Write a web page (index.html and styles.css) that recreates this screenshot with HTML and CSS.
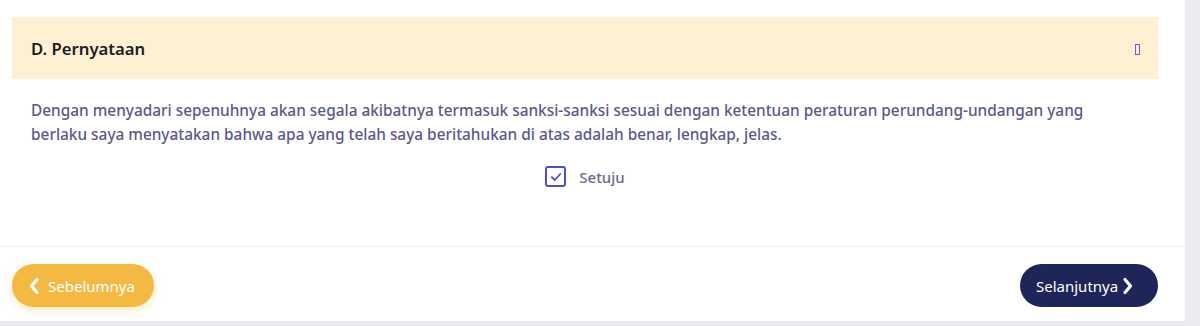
FILE: index.html
```html
<!DOCTYPE html>
<html>
    <head>
        <title>Pernyataan</title>
        <link rel="stylesheet" href="styles.css">
    </head>
    <body>
        <div class="card">
            <div class="card-body">
                <div class="section-head">
                    <span class="section-title">D. Pernyataan</span>
                    <span class="tofu"></span>
                </div>
                <p class="statement">Dengan menyadari sepenuhnya akan segala akibatnya termasuk sanksi-sanksi sesuai dengan ketentuan peraturan perundang-undangan yang berlaku saya menyatakan bahwa apa yang telah saya beritahukan di atas adalah benar, lengkap, jelas.</p>
                <label class="agree">
                    <span class="check">
                        <svg width="12" height="12" viewBox="0 0 12 12"><path d="M1.8 6.2 L4.8 9 L10.2 3" fill="none" stroke="#4b4fc9" stroke-width="1.8" stroke-linecap="round" stroke-linejoin="round"/></svg>
                    </span>
                    Setuju
                </label>
            </div>
            <div class="card-foot">
                <button class="btn btn-prev">
                    <svg width="12" height="18" viewBox="0 0 12 18"><path d="M9 2.5 L3.5 9 L9 15.5" fill="none" stroke="#fff" stroke-width="3.2" stroke-linecap="round" stroke-linejoin="round"/></svg>
                    Sebelumnya
                </button>
                <button class="btn btn-next">
                    Selanjutnya
                    <svg width="12" height="18" viewBox="0 0 12 18"><path d="M3 2.5 L8.5 9 L3 15.5" fill="none" stroke="#fff" stroke-width="3.2" stroke-linecap="round" stroke-linejoin="round"/></svg>
                </button>
            </div>
        </div>
    </body>
</html>
```

FILE: styles.css
```css
body{
    margin: 0;
    background-color: #ebebf0;
    font-family: "Noto Sans", "Open Sans", sans-serif;
}

.card{
    width: 1185px;
    height: 321px;
    background-color: #fff;
    display: flex;
    flex-direction: column;
}

.card-body{
    padding: 17px 27px 0 12px;
    height: 229px;
}

.section-head{
    height: 62px;
    background-color: #fdf0d3;
    display: flex;
    align-items: center;
    justify-content: space-between;
    padding: 0 18px 0 19px;
}

.section-title{
    font-size: 16.7px;
    font-weight: 600;
    color: #1c1c24;
}

.tofu{
    width: 3px;
    height: 9px;
    border: 1px solid #6a5fd8;
    margin-top: 2px;
}

.statement{
    margin: 20px 60px 0 19px;
    font-size: 15.4px;
    font-weight: 500;
    line-height: 24px;
    color: #5a598a;
}

.agree{
    display: flex;
    align-items: center;
    justify-content: center;
    gap: 13px;
    margin-top: 19px;
    font-size: 15px;
    font-weight: 500;
    color: #6a6a8c;
}

.check{
    width: 17px;
    height: 17px;
    border: 2px solid #4b4fc9;
    border-radius: 3px;
    display: flex;
    align-items: center;
    justify-content: center;
}

.card-foot{
    border-top: 1px solid #efeff2;
    display: flex;
    justify-content: space-between;
    padding: 17px 27px 0 12px;
}

.btn{
    height: 43px;
    border: 0;
    border-radius: 22px;
    font-family: "Noto Sans", "Open Sans", sans-serif;
    font-size: 15px;
    color: #fff;
    display: flex;
    align-items: center;
    gap: 8px;
}

.btn-prev{
    width: 142px;
    padding-left: 16px;
    background-color: #f4b942;
    box-shadow: 0 3px 8px rgba(244, 185, 66, 0.35);
}

.btn-next{
    width: 138px;
    padding-left: 16px;
    gap: 4px;
    background-color: #1e2659;
}
```
